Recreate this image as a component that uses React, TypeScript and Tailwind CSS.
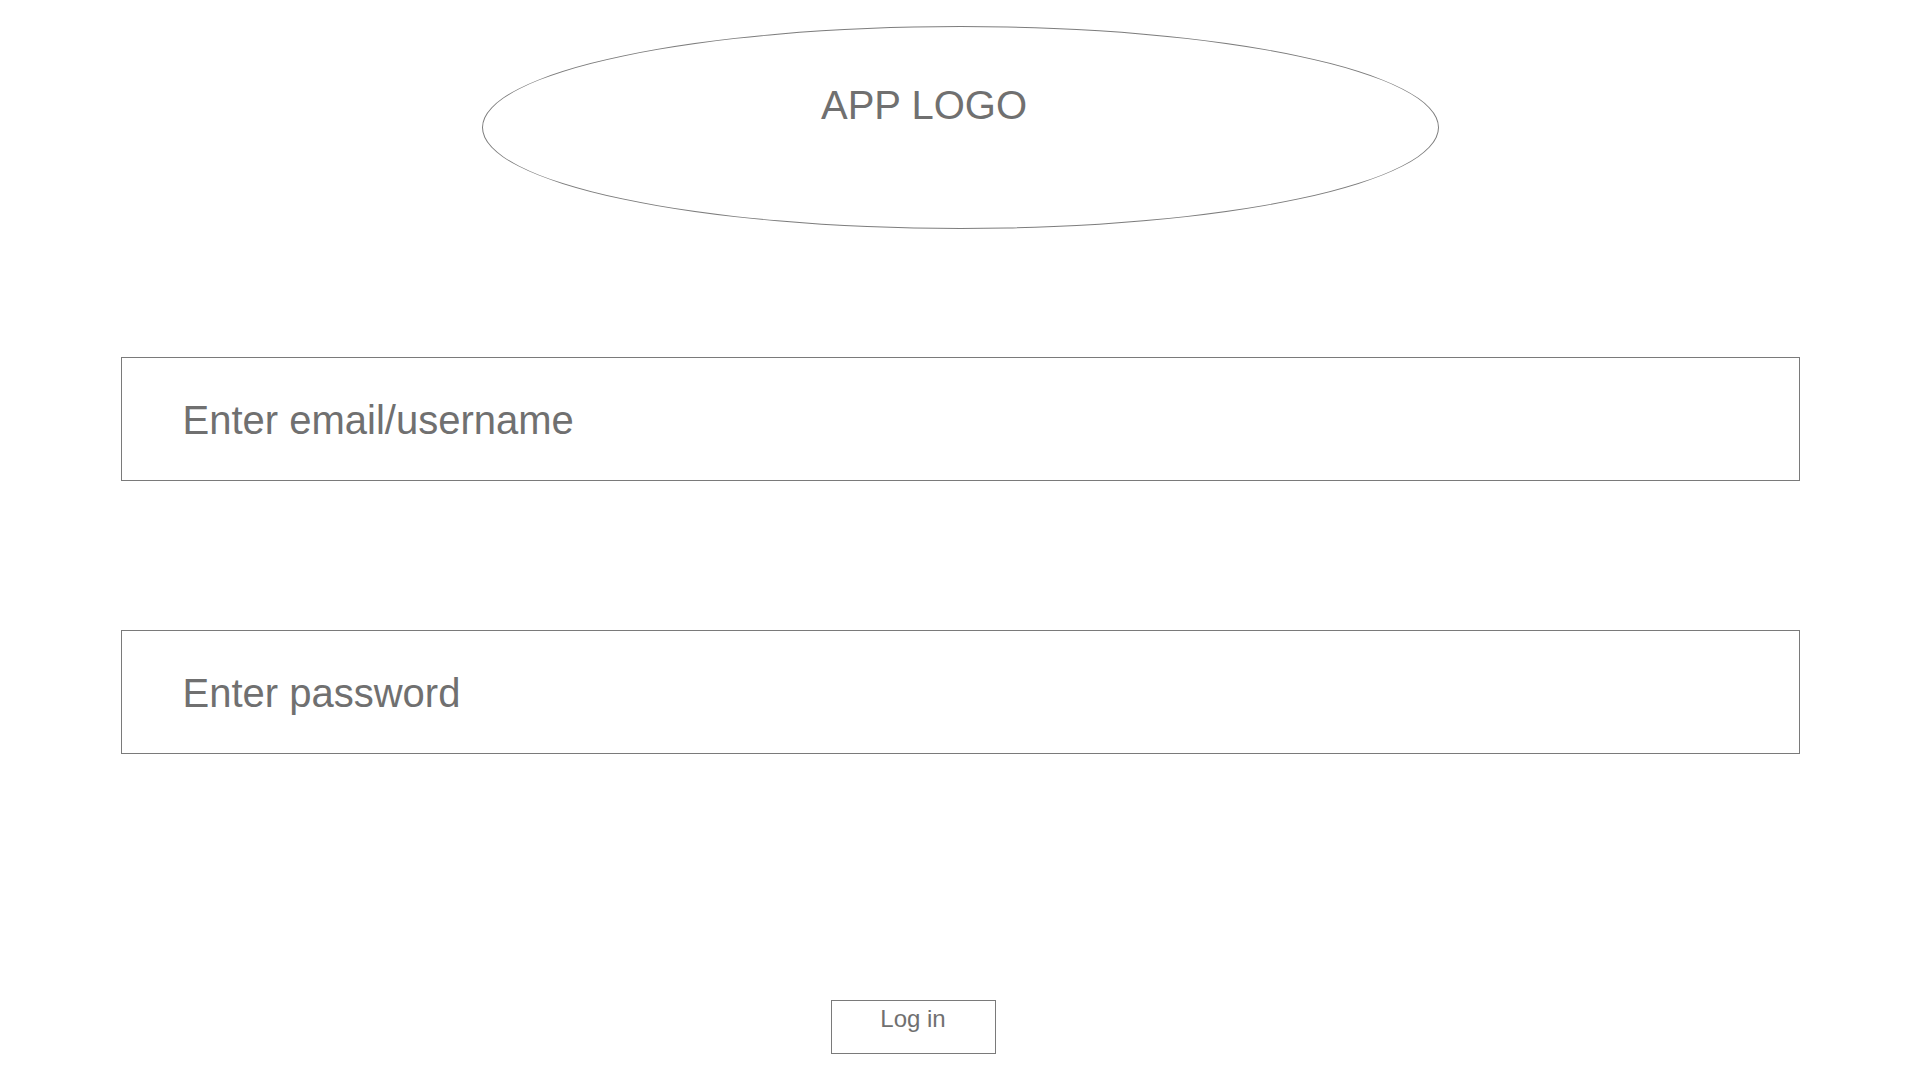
import React, { useState } from 'react';

const FONT = "font-['Liberation_Sans','Helvetica','Arial',sans-serif]";

export default function App() {
  const [login, setLogin] = useState('');
  const [password, setPassword] = useState('');

  return (
    <div className={`min-h-screen w-full bg-white flex flex-col items-center ${FONT}`}>
      {/* Logo placeholder */}
      <div className="mt-[26px] w-[957px] h-[203px] rounded-[50%] border border-[#7d7d7d] flex justify-center pr-[72px] pt-[55px]">
        <span className="text-[40px] leading-[46px] text-[#707070]">APP LOGO</span>
      </div>

      <form
        className="w-full flex flex-col items-center"
        onSubmit={(e) => e.preventDefault()}
      >
        <input
          type="text"
          value={login}
          onChange={(e) => setLogin(e.target.value)}
          placeholder="Enter email/username"
          className="mt-[128px] w-[1679px] h-[124px] border border-[#7a7a7a] bg-white pl-[61px] pt-[2px] text-[40px] text-[#707070] placeholder:text-[#707070] outline-none"
        />
        <input
          type="password"
          value={password}
          onChange={(e) => setPassword(e.target.value)}
          placeholder="Enter password"
          className="mt-[149px] w-[1679px] h-[124px] border border-[#7a7a7a] bg-white pl-[61px] pt-[2px] text-[40px] text-[#707070] placeholder:text-[#707070] outline-none"
        />
        <button
          type="submit"
          className="mt-[246px] ml-[-94px] w-[165px] h-[54px] border border-[#7a7a7a] bg-white flex justify-center items-start pt-[4px] text-[24px] leading-[27px] text-[#707070]"
        >
          Log in
        </button>
      </form>
    </div>
  );
}
